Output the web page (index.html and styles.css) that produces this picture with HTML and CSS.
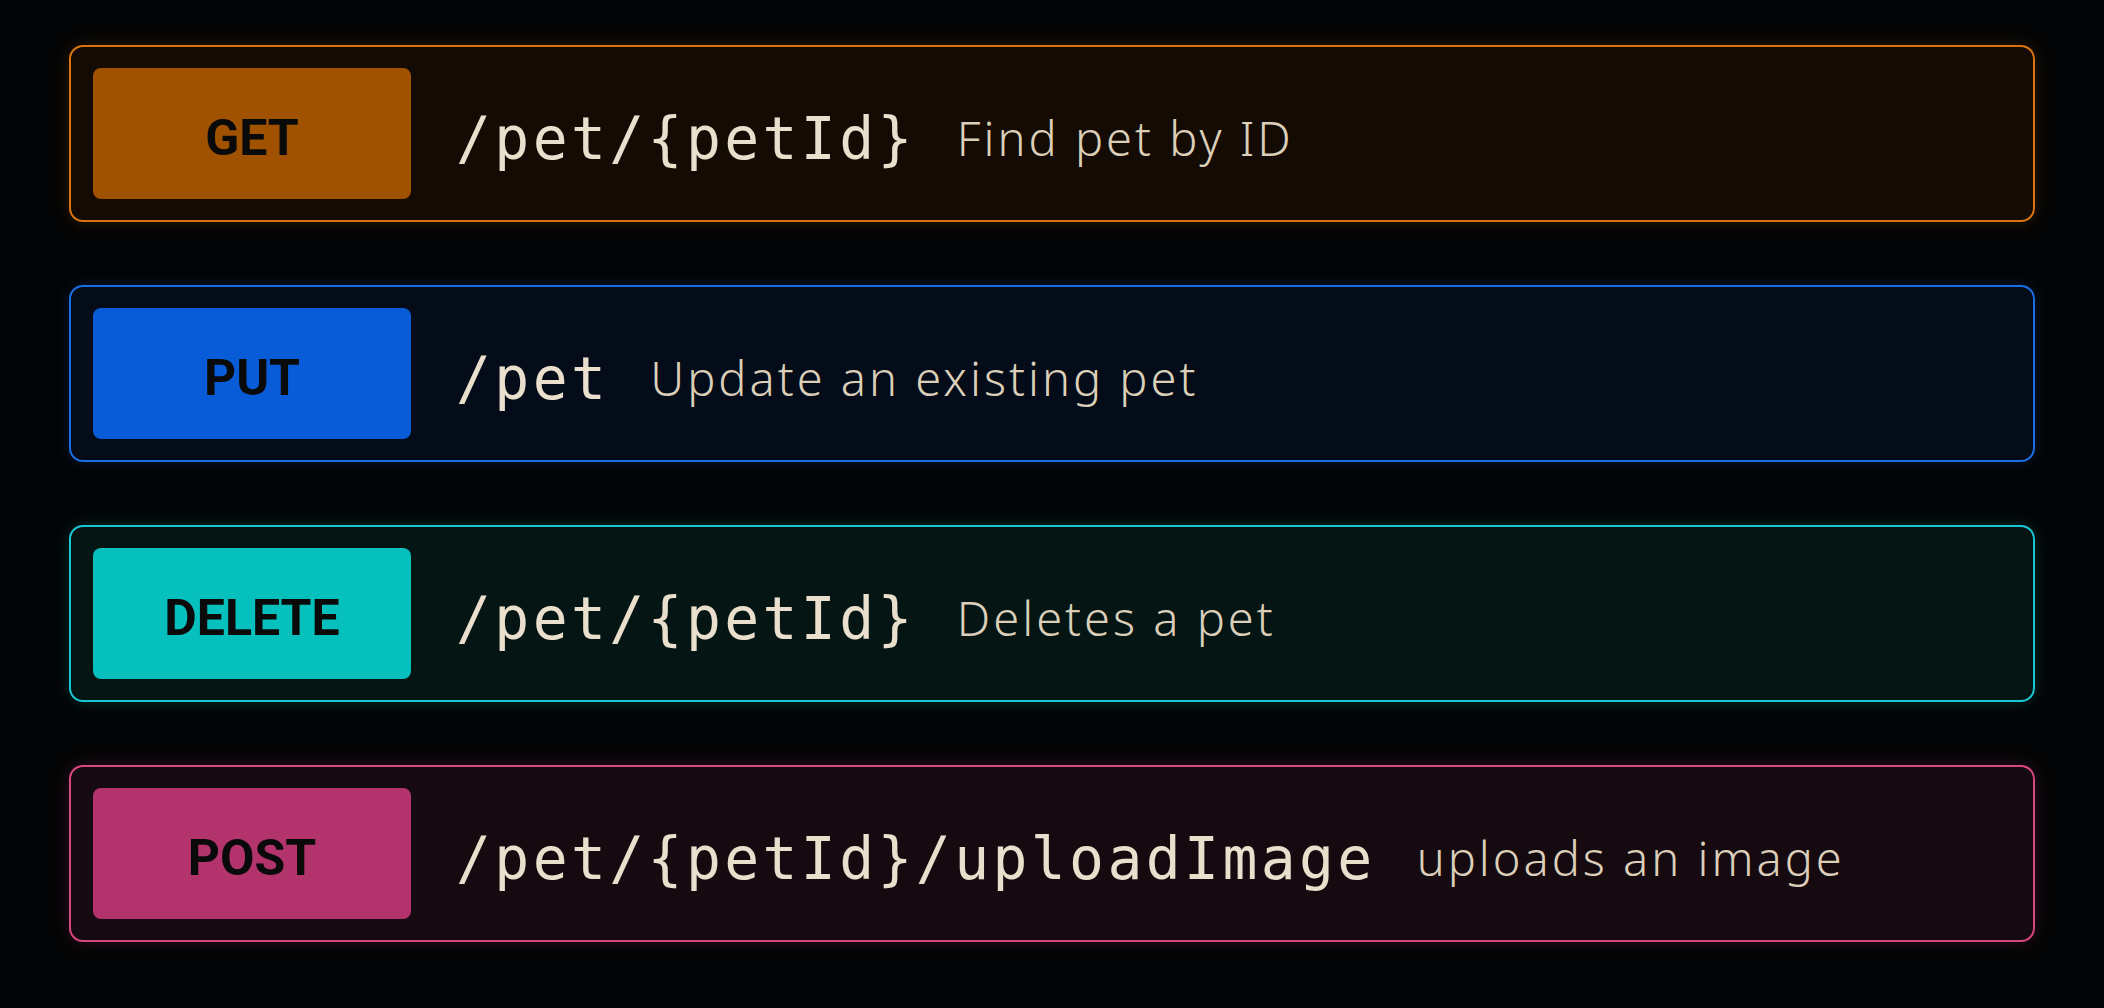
FILE: index.html
```html
<!DOCTYPE html>
<html lang="en">
<head>
<meta charset="utf-8">
<title>Pet API operations</title>
<link rel="stylesheet" href="styles.css">
</head>
<body>
<main class="ops">
  <div class="op op-get">
    <span class="method">GET</span>
    <span class="path">/pet/{petId}</span>
    <span class="desc">Find pet by ID</span>
  </div>
  <div class="op op-put">
    <span class="method">PUT</span>
    <span class="path">/pet</span>
    <span class="desc">Update an existing pet</span>
  </div>
  <div class="op op-delete">
    <span class="method">DELETE</span>
    <span class="path">/pet/{petId}</span>
    <span class="desc">Deletes a pet</span>
  </div>
  <div class="op op-post">
    <span class="method">POST</span>
    <span class="path">/pet/{petId}/uploadImage</span>
    <span class="desc">uploads an image</span>
  </div>
</main>
</body>
</html>
```
FILE: styles.css
```css
html, body {
  margin: 0;
  padding: 0;
  background: #030405;
  height: 100%;
}

.ops {
  display: flex;
  flex-direction: column;
  gap: 63px;
  padding: 45px 69px;
}

.op {
  display: flex;
  align-items: center;
  height: 131px;
  padding: 21px 22px;
  border: 2px solid;
  border-radius: 14px;
}

.method {
  flex: 0 0 318px;
  height: 131px;
  box-sizing: border-box;
  padding-top: 8px;
  display: flex;
  align-items: center;
  justify-content: center;
  border-radius: 8px;
  font-family: Roboto, "Liberation Sans", sans-serif;
  font-weight: 700;
  font-size: 50px;
  color: #0a0a0a;
}

.path {
  margin-left: 45px;
  padding-top: 10px;
  font-family: "DejaVu Sans Mono", "Liberation Mono", monospace;
  font-size: 58px;
  letter-spacing: 3.4px;
  color: #e9dfcc;
}

.desc {
  margin-left: 41px;
  padding-top: 8px;
  font-family: "Noto Sans", "Open Sans", sans-serif;
  font-weight: 300;
  font-size: 47px;
  letter-spacing: 3px;
  color: #dccfb9;
}

.op-get {
  border-color: #d9740f;
  background: #140c04;
  box-shadow: 0 0 16px rgba(217, 116, 15, 0.2);
}
.op-get .method { background: #a05200; }

.op-put {
  border-color: #1c6de6;
  background: #030c18;
  box-shadow: 0 0 16px rgba(28, 109, 230, 0.2);
}
.op-put .method { background: #095cd7; }

.op-delete {
  border-color: #1ac6d2;
  background: #041514;
  box-shadow: 0 0 16px rgba(26, 198, 210, 0.2);
}
.op-delete .method { background: #05c0bd; }

.op-post {
  border-color: #d8477f;
  background: #160a11;
  box-shadow: 0 0 16px rgba(216, 71, 127, 0.2);
}
.op-post .method { background: #b3346c; }
```
